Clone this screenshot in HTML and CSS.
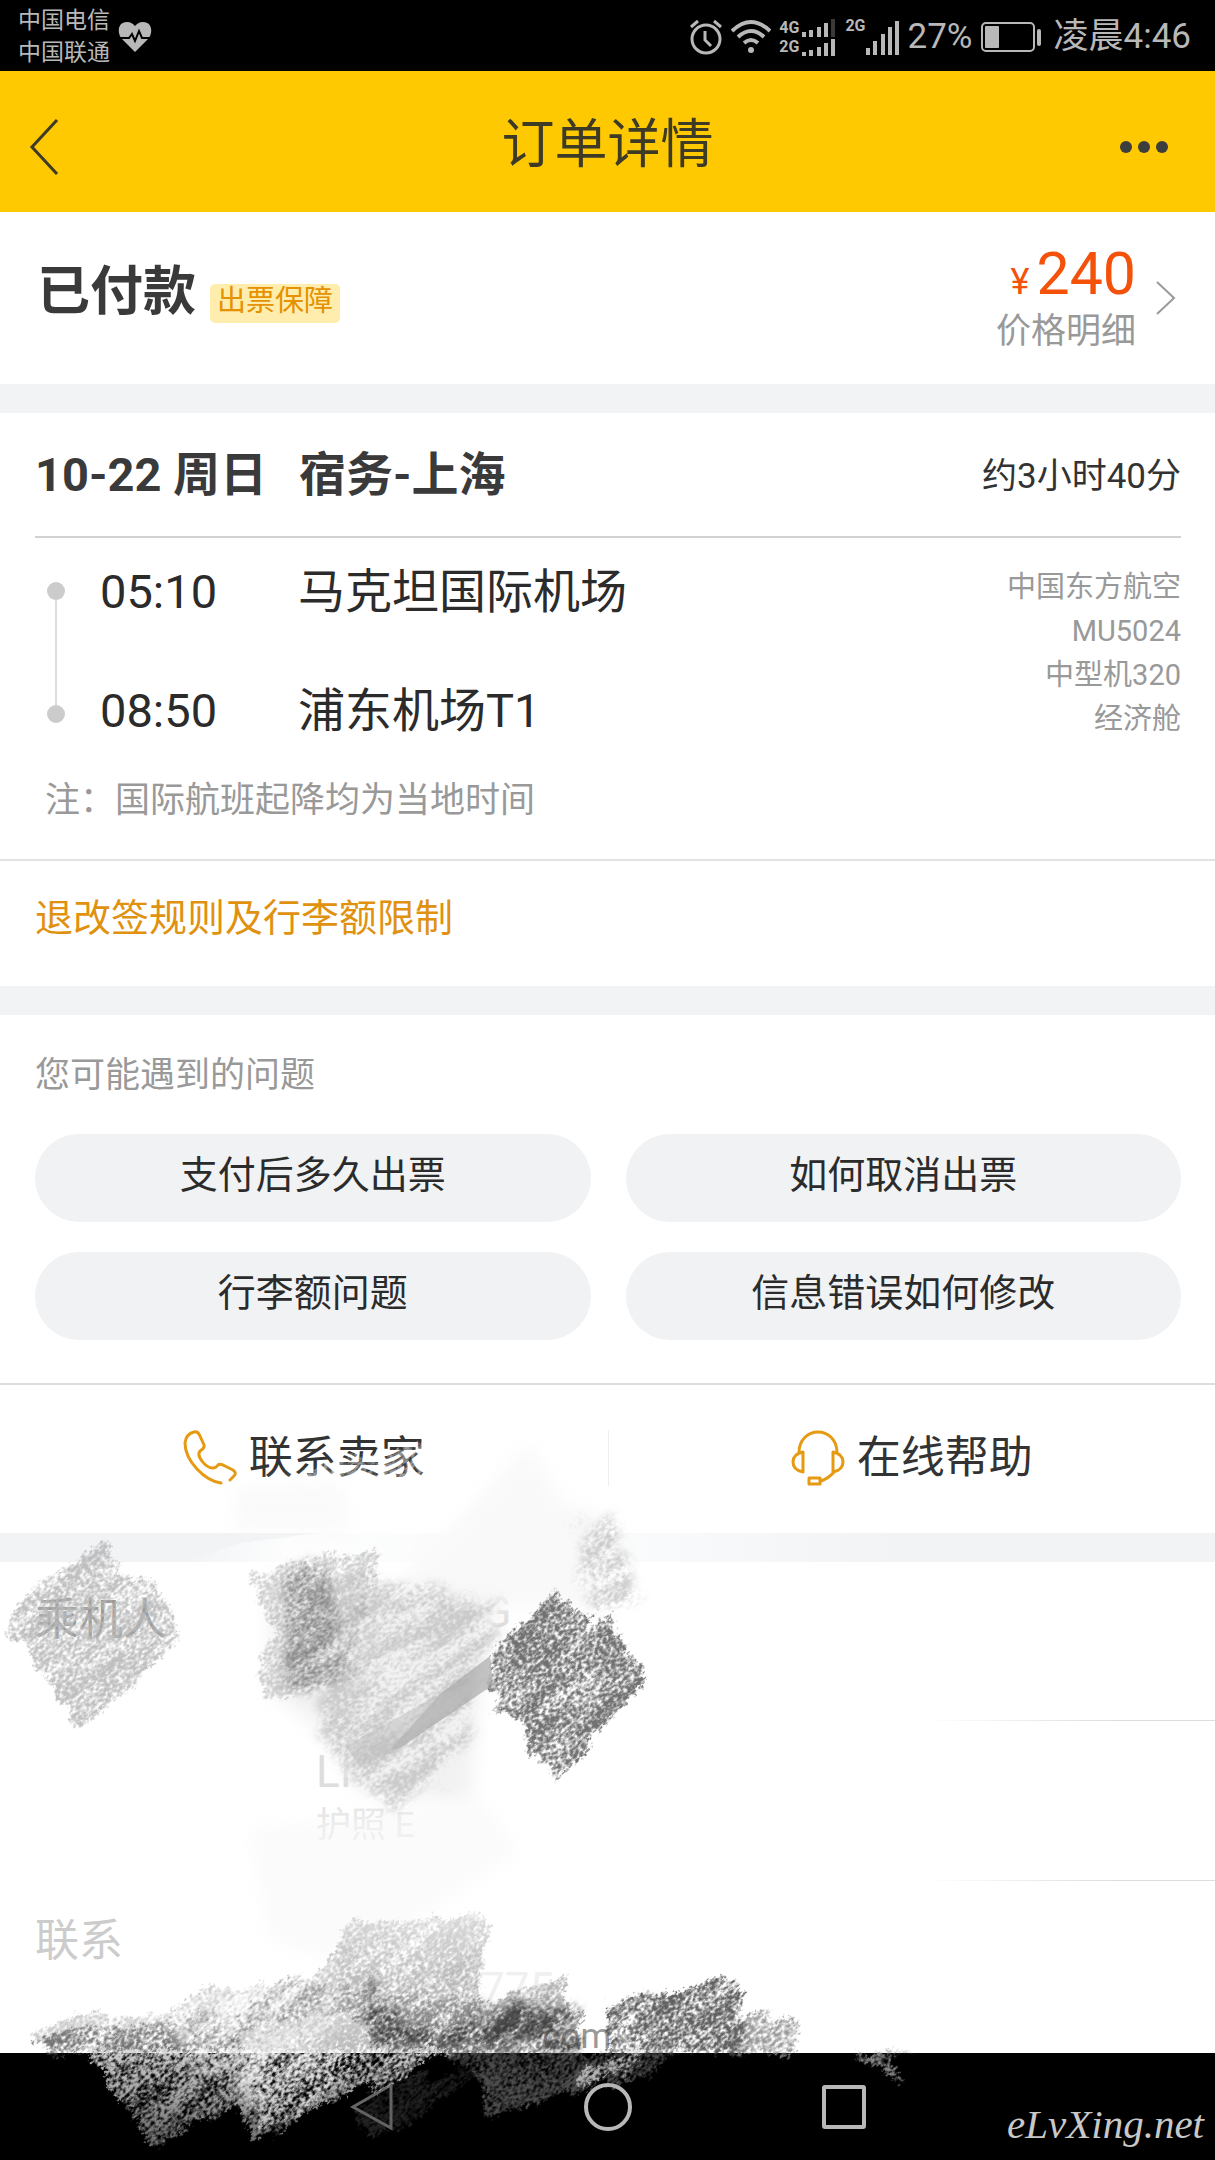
FILE: index.html
```html
<!DOCTYPE html>
<html lang="zh-CN">
<head>
<meta charset="utf-8">
<meta name="viewport" content="width=device-width, initial-scale=1">
<title>订单详情</title>
<link rel="stylesheet" href="styles.css">
</head>
<body>
<div class="page">
  <div class="status">
    <div class="carriers"><span>中国电信</span><span>中国联通</span></div>
    <svg class="heart" width="34" height="32" viewBox="0 0 34 32" aria-hidden="true">
      <path fill="#b8b8b8" d="M17 31 L3 17 C-1 11 0 1 9 1 C13 1 15 3 17 5 C19 3 21 1 25 1 C34 1 35 11 31 17 Z"/>
      <path fill="none" stroke="#000" stroke-width="2" d="M0 17 H11 L14 13 L17 20 L21 10 L24 17 H34"/>
    </svg>
    <div class="indicators">
      <svg width="34" height="36" viewBox="0 0 34 36" fill="none" stroke="#b8b8b8" aria-hidden="true">
        <circle cx="17" cy="20" r="14" stroke-width="3"/>
        <path stroke-width="3" d="M16 12 V21 L22 27 M2 8 L9 2 M32 8 L25 2"/>
      </svg>
      <svg width="40" height="36" viewBox="0 0 40 36" fill="none" stroke="#b8b8b8" stroke-width="4" aria-hidden="true">
        <path d="M1 12 Q20 -6 39 12 M7 18 Q20 6 33 18 M13 24 Q20 18 27 24"/>
        <circle cx="20" cy="31" r="3" fill="#b8b8b8" stroke="none"/>
      </svg>
      <div class="nets"><span>4G</span><span>2G</span></div>
      <svg class="small-bars" width="36" height="38" viewBox="0 0 36 38" stroke="#b8b8b8" stroke-width="4" aria-hidden="true">
        <path d="M3 19 V14 M10 19 V12 M18 19 V9 M25 19 V5 M3 38 V34 M10 38 V32 M18 38 V29 M25 38 V25 M32 38 V21"/>
        <path stroke="#3a3a3a" d="M32 19 V1"/>
      </svg>
      <span class="net">2G</span>
      <svg width="34" height="36" viewBox="0 0 34 36" stroke="#b8b8b8" stroke-width="4" aria-hidden="true">
        <path d="M2 36 V29 M9 36 V22 M17 36 V15 M24 36 V8 M31 36 V2"/>
      </svg>
      <span class="percent">27%</span>
      <svg class="battery" width="61" height="30" viewBox="0 0 61 30" aria-hidden="true">
        <rect x="1" y="1" width="52" height="28" rx="4" fill="none" stroke="#b8b8b8" stroke-width="2"/>
        <rect x="4" y="4" width="14" height="22" rx="1" fill="#b8b8b8"/>
        <rect x="56" y="7" width="4" height="17" rx="2" fill="#b8b8b8"/>
      </svg>
      <span>凌晨4:46</span>
    </div>
  </div>

  <header class="topbar">
    <button class="icon-button" aria-label="返回">
      <svg width="30" height="56" viewBox="0 0 30 56" fill="none" stroke="#3d3a26" stroke-width="3"><path d="M28 1 L3 28 L28 55"/></svg>
    </button>
    <h1>订单详情</h1>
    <button class="icon-button more" aria-label="更多">
      <svg width="50" height="14" viewBox="0 0 50 14" fill="#3d3d3d"><circle cx="7" cy="7" r="6"/><circle cx="25" cy="7" r="6"/><circle cx="43" cy="7" r="6"/></svg>
    </button>
  </header>

  <main>
    <section class="paid">
      <h2>已付款</h2><span class="badge">出票保障</span>
      <a class="price" href="#price">
        <span class="price-text">
          <span class="amount"><small>¥</small>240</span>
          <span class="detail">价格明细</span>
        </span>
        <svg width="20" height="34" viewBox="0 0 20 34" fill="none" stroke="#999" stroke-width="2"><path d="M1 1 L18 17 L1 33"/></svg>
      </a>
    </section>

    <section class="flight">
      <div class="flight-head">
        <h3><span class="date">10-22 周日</span>宿务-上海</h3>
        <span class="duration">约3小时40分</span>
      </div>
      <div class="route">
        <div class="track"><i></i><i></i></div>
        <div class="legs">
          <div class="leg"><time>05:10</time><span>马克坦国际机场</span></div>
          <div class="leg"><time>08:50</time><span>浦东机场T1</span></div>
        </div>
        <div class="plane"><span>中国东方航空</span><span>MU5024</span><span>中型机320</span><span>经济舱</span></div>
      </div>
      <p class="note">注：国际航班起降均为当地时间</p>
      <a class="rules" href="#rules">退改签规则及行李额限制</a>
    </section>

    <section class="faq">
      <h4>您可能遇到的问题</h4>
      <div class="pills">
        <button>支付后多久出票</button>
        <button>如何取消出票</button>
        <button>行李额问题</button>
        <button>信息错误如何修改</button>
      </div>
    </section>
    <section class="contact">
      <a href="#seller">
        <svg width="54" height="56" viewBox="0 0 54 56" fill="none" stroke="#e59a12" stroke-width="3" stroke-linecap="round" stroke-linejoin="round"><path d="M38 53 C22 51 2 31 2 13 Q3 4 11 2 Q15 1 17 6 L21 15 Q22 18 17 21 Q14 25 19 31 Q24 38 30 38 Q33 38 35 35 Q37 33 42 36 L50 40 Q54 43 51 46 L47 50"/></svg>
        <span>联系卖家</span>
      </a>
      <a href="#help">
        <svg width="54" height="56" viewBox="0 0 54 56" fill="none" stroke="#e59a12" stroke-width="3" stroke-linejoin="round"><path d="M8 23 C8 -5 46 -5 46 23 M12 22 Q2 24 2 32 Q2 40 12 42 Z M42 22 Q52 24 52 32 Q52 40 42 42 Z M43 42 Q38 48 30 51 M18 48 H29 V54 H18 Z"/></svg>
        <span>在线帮助</span>
      </a>
    </section>

    <section class="people">
      <div class="person first"><span class="label">乘机人</span><span class="ghost name">NG</span></div>
      <div class="person second"><span></span><span class="ghost pass"><b>LI</b><span>护照 E</span></span></div>
      <div class="person third"><span class="label faint">联系</span><span class="ghost reach"><span class="phone">775</span><span class="mail">.com</span></span></div>
    </section>
  </main>

  <nav class="navbar">
    <button aria-label="返回"><svg width="48" height="50" viewBox="0 0 48 50" fill="none" stroke="#666" stroke-width="3"><path d="M43 3 V46 L5 25 Z"/></svg></button>
    <button aria-label="主页"><svg width="50" height="50" viewBox="0 0 50 50" fill="none" stroke="#b8b8b8" stroke-width="4"><circle cx="25" cy="25" r="22"/></svg></button>
    <button aria-label="最近"><svg width="48" height="50" viewBox="0 0 48 50" fill="none" stroke="#b8b8b8" stroke-width="4"><rect x="4" y="5" width="40" height="40" rx="1"/></svg></button>
  </nav>

  <!-- chalk strokes that hide the personal data; the grain runs along the stroke direction -->
  <svg class="chalk" width="940" height="740" viewBox="0 1420 940 740" color-interpolation-filters="sRGB" aria-hidden="true">
    <defs>
      <filter id="grain" x="-5%" y="-5%" width="110%" height="110%">
        <feTurbulence type="fractalNoise" baseFrequency=".22 .34" numOctaves="3" seed="4" result="n"/>
        <feTurbulence type="fractalNoise" baseFrequency=".015 .07" numOctaves="3" seed="11" result="w"/>
        <feDisplacementMap in="SourceGraphic" in2="w" scale="24" xChannelSelector="R" yChannelSelector="G" result="d0"/>
        <feDisplacementMap in="d0" in2="n" scale="14" xChannelSelector="R" yChannelSelector="G" result="d"/>
        <feComposite in="n" in2="w" operator="arithmetic" k1="0" k2=".7" k3=".3" k4="0" result="mix"/>
        <feColorMatrix in="mix" values="0 0 0 0 0  0 0 0 0 0  0 0 0 0 0  0 0 0 4 -1.35" result="m"/>
        <feComposite in="d" in2="m" operator="in"/>
      </filter>
      <filter id="loose" x="-5%" y="-5%" width="110%" height="110%">
        <feTurbulence type="fractalNoise" baseFrequency=".2 .34" numOctaves="3" seed="9" result="n"/>
        <feTurbulence type="fractalNoise" baseFrequency=".015 .06" numOctaves="3" seed="3" result="w"/>
        <feDisplacementMap in="SourceGraphic" in2="w" scale="40" xChannelSelector="R" yChannelSelector="G" result="d0"/>
        <feGaussianBlur in="d0" stdDeviation="5" result="d"/>
        <feComposite in="n" in2="w" operator="arithmetic" k1="0" k2=".55" k3=".45" k4="0" result="mix"/>
        <feColorMatrix in="mix" values="0 0 0 0 0  0 0 0 0 0  0 0 0 0 0  0 0 0 4 -1.5" result="m"/>
        <feComposite in="d" in2="m" operator="in"/>
      </filter>
      <filter id="haze" x="-10%" y="-10%" width="120%" height="120%"><feGaussianBlur stdDeviation="9"/></filter>
      <linearGradient id="smoke" x1="0" y1="1915" x2="0" y2="2054" gradientUnits="userSpaceOnUse">
        <stop offset="0" stop-color="#888" stop-opacity=".3"/><stop offset=".55" stop-color="#777" stop-opacity=".55"/><stop offset="1" stop-color="#555" stop-opacity=".8"/>
      </linearGradient>
      <linearGradient id="dust" x1="0" y1="2040" x2="0" y2="2145" gradientUnits="userSpaceOnUse">
        <stop offset="0" stop-color="#fff" stop-opacity=".85"/><stop offset=".5" stop-color="#eee" stop-opacity=".7"/><stop offset="1" stop-color="#ccc" stop-opacity=".5"/>
      </linearGradient>
      <linearGradient id="veil" x1="180" y1="0" x2="900" y2="0" gradientUnits="userSpaceOnUse">
        <stop offset="0" stop-color="#fff" stop-opacity="0"/><stop offset=".15" stop-color="#fff" stop-opacity=".85"/><stop offset=".6" stop-color="#fff" stop-opacity=".7"/><stop offset="1" stop-color="#fff" stop-opacity="0"/>
      </linearGradient>
    </defs>
    <path fill="url(#veil)" d="M180 1564 L240 1543 L380 1525 H900 V1564Z"/>
    <g filter="url(#haze)" fill="#f8f8f8">
      <path opacity=".9" d="M530 1445 L560 1500 L610 1520 L600 1610 L380 1600 L430 1550Z"/>
      <path opacity=".7" d="M235 1490 L340 1480 L350 1530 L235 1530Z"/>
      <path opacity=".6" d="M250 1830 L480 1800 L520 1850 L400 1930 L330 1960 L270 1940Z"/>
      <path fill="#f2f2f2" d="M270 1575 L500 1600 L480 1680 L470 1800 L360 1790 L320 1730 L270 1690Z"/>
    </g>
    <g transform="rotate(-42)" filter="url(#grain)"><g transform="rotate(42)">
      <path fill="#fff" opacity=".5" d="M310 1466 L440 1440 L440 1485 L300 1490Z"/>
      <path fill="#b8b8b8" opacity=".9" d="M106 1538 L129 1573 L134 1593 L154 1580 L170 1610 L181 1638 L80 1728 L71 1717 L58 1697 L27 1650 L5 1627 L31 1590Z"/>
      <path fill="#686868" opacity=".95" d="M556 1593 L585 1620 L589 1640 L609 1623 L629 1653 L646 1677 L556 1782 L548 1770 L531 1753 L520 1720 L493 1707 L491 1653Z"/>
      <path fill="#8a8a8a" opacity=".4" d="M250 1575 L286 1563 L380 1550 L375 1590 L348 1650 L353 1677 L263 1700 L263 1660 L275 1640 L263 1610Z"/>
    </g></g>
    <g transform="rotate(-35)" filter="url(#loose)"><g transform="rotate(35)">
      <path fill="#444" opacity=".5" d="M285 1570 L335 1565 L340 1680 L290 1690 L280 1620Z"/>
      <path fill="#999" opacity=".45" d="M360 1570 L430 1590 L505 1600 L480 1660 L465 1750 L400 1815 L355 1780 L320 1735 L325 1690Z"/>
      <path fill="#999" opacity=".5" d="M605 1512 L615 1530 L628 1560 L640 1600 L600 1615 L575 1575 L578 1535Z"/>
    </g></g>
    <path fill="#aaa" opacity=".7" d="M490 1656 L493 1685 L400 1748 L390 1750 L440 1694Z"/>
    <path fill="#bbb" opacity=".5" d="M440 1694 L493 1675 L400 1748 L360 1768 L346 1746Z"/>
    <g transform="rotate(-42)" filter="url(#grain)"><g transform="rotate(42)">
      <path fill="#aaa" opacity=".6" d="M30 2033 L65 2020 L157 2013 L211 1990 L300 1985 L482 2000 L477 2054 H50Z"/>
      <path fill="url(#smoke)" d="M30 2040 L157 2020 L240 2005 L320 1973 L347 1923 L488 1915 L482 2000 L566 1975 L569 2010 L580 2017 L577 2054 H50Z"/>
      <path fill="#444" opacity=".85" d="M607 2003 L740 1976 L738 2005 L745 2015 L750 2054 H607Z"/>
      <path fill="#888" opacity=".85" d="M742 2015 L802 2022 L789 2054 H740Z"/>
    </g></g>
    <g transform="rotate(-42)" filter="url(#loose)"><g transform="rotate(42)">
      <path fill="#222" opacity=".75" d="M365 1975 L390 2010 L430 2030 L500 2010 L560 2000 L580 2048 H380 L360 2020Z"/>
      <path fill="#fff" opacity=".7" d="M150 2000 L330 1960 L350 2020 L260 2110 L200 2070Z"/>
    </g></g>
    <g transform="rotate(-42)" filter="url(#grain)"><g transform="rotate(42)">
      <path fill="url(#dust)" d="M87 2050 L130 2110 L149 2140 L161 2145 L190 2127 L238 2103 L255 2137 L279 2133 L325 2107 L390 2080 L450 2050Z"/>
      <path fill="#fff" opacity=".5" d="M240 2030 L350 2010 L375 2040 L300 2115 L262 2130 L250 2070Z"/>
      <path fill="#aaa" opacity=".45" d="M450 2054 L490 2090 L482 2115 L542 2100 L645 2077 L672 2054Z"/>
      <path fill="#ddd" opacity=".7" d="M580 2083 L590 2062 L640 2058 L620 2075Z"/>
      <path fill="#aaa" opacity=".8" d="M853 2054 H917 L890 2060 L903 2081 L890 2075 L872 2065Z"/>
      <path fill="#555" opacity=".4" d="M390 2080 L490 2070 L420 2110 L370 2140 L355 2110Z"/>
    </g></g>
  </svg>
  <span class="watermark">eLvXing.net</span>
</div>
</body>
</html>
```
FILE: styles.css
```css
* { box-sizing: border-box; margin: 0; padding: 0; }
body { background: #fff; color: #333; font-family: Roboto, "Noto Sans CJK SC", sans-serif; font-weight: 400; }
button { border: 0; background: none; font: inherit; color: inherit; }
a { color: inherit; text-decoration: none; }
svg { display: block; flex: none; }
.page { position: relative; min-height: 100vh; display: flex; flex-direction: column; }
main { flex: 1; display: flex; flex-direction: column; background: #f1f3f5; }

.status { display: flex; align-items: center; height: 71px; padding: 2px 24px 0 18px; background: #000; color: #b8b8b8; }
.carriers { display: flex; flex-direction: column; font-size: 23px; line-height: 32px; }
.heart { margin-left: 8px; }
.indicators { margin-left: auto; display: flex; align-items: center; gap: 8px; font-size: 35px; line-height: 48px; }
.nets { display: flex; flex-direction: column; }
.nets span, .net { font: bold 16px/19px Roboto, sans-serif; }
.small-bars { margin-left: -6px; }
.net { align-self: flex-start; margin: 3px -8px 0 0; }
.battery { margin-right: 4px; }

.topbar { display: grid; grid-template-columns: 1fr auto 1fr; align-items: center; height: 141px; padding: 10px 46px 0 29px; background: #fec901; color: #3d3a26; }
.topbar h1 { font-size: 53px; font-weight: 400; line-height: 72px; padding: 0 0 4px 17px; }
.icon-button { width: 50px; display: flex; }
.more { justify-self: end; }

.paid { display: flex; align-items: center; padding: 28px 39px 28px 37px; margin-bottom: 29px; background: #fff; }
.paid h2 { font-size: 53px; line-height: 72px; padding-bottom: 12px; color: #3a3a3a; }
.badge { margin: 10px 0 0 14px; padding: 0 7px 4px; border-radius: 5px; background: #ffedad; color: #e59100; font-size: 29px; line-height: 35px; }
.price { margin-left: auto; display: flex; align-items: center; gap: 20px; }
.price-text { display: flex; flex-direction: column; align-items: flex-end; }
.amount { font-size: 59px; line-height: 68px; color: #f4510b; }
.amount small { font-size: 36px; line-height: 0; margin-right: 7px; }
.detail { font-size: 35px; line-height: 48px; color: #999; }

.flight { background: #fff; margin-bottom: 29px; }
.flight-head { display: flex; align-items: center; justify-content: space-between; margin: 0 34px 0 35px; height: 125px; border-bottom: 2px solid #d2d2d2; }
.flight-head h3 { display: flex; font-size: 47px; line-height: 64px; color: #3a3a3a; }
.date { width: 264px; }
.duration { padding-bottom: 4px; font-size: 35px; }
.route { display: flex; padding: 22px 34px 0 47px; }
.track { width: 18px; height: 141px; margin-top: 22px; display: flex; flex-direction: column; justify-content: space-between; background: linear-gradient(#ddd, #ddd) center / 2px 100% no-repeat; }
.track i { width: 18px; height: 18px; border-radius: 50%; background: #ccc; }
.legs { margin-left: 35px; display: flex; flex-direction: column; gap: 55px; font-size: 47px; line-height: 64px; color: #2b2b2b; }
.leg { display: flex; }
.leg time { width: 198px; }
.plane { margin: 5px 0 0 auto; display: flex; flex-direction: column; align-items: flex-end; font-size: 29px; line-height: 44px; color: #999; }
.note { padding: 32px 45px 32px; font-size: 35px; line-height: 52px; color: #999; }
.rules { display: block; padding: 29px 35px 40px; border-top: 2px solid #e2e2e2; font-size: 38px; line-height: 56px; color: #e0910f; }

.faq { padding: 37px 34px 43px 35px; background: #fff; }
.faq h4 { font-size: 35px; font-weight: 400; line-height: 48px; color: #999; }
.pills { display: grid; grid-template-columns: 1fr 1fr; gap: 30px 35px; margin-top: 34px; }
.pills button { height: 88px; padding-bottom: 14px; border-radius: 44px; background: #f1f2f4; font-size: 38px; color: #2b2b2b; }
.contact { display: grid; grid-template-columns: 1fr 1fr; border-top: 2px solid #ddd; margin-bottom: 29px; padding: 45px 0 47px; background: #fff; }
.contact a { display: flex; align-items: center; justify-content: center; gap: 12px; height: 56px; font-size: 44px; }
.contact span { padding-bottom: 8px; }
.contact a + a { border-left: 1px solid #eee; }

.people { flex: 1; background: #fff; }
.person { display: grid; grid-template-columns: 281px 1fr; padding-left: 35px; background: linear-gradient(90deg, transparent 76%, #ddd 92%) bottom / 100% 1px no-repeat; }
.first { padding-top: 26px; height: 159px; }
.second { padding-top: 27px; height: 160px; }
.third { padding-top: 28px; background: none; }
.label { font-size: 44px; line-height: 64px; color: #999; }
.faint { color: #ccc; }
.ghost { color: #ddd; font-size: 44px; line-height: 48px; }
.name { padding-left: 134px; }
.pass { display: flex; flex-direction: column; gap: 6px; }
.pass b { font-weight: 400; color: #ddd; }
.pass span { font-size: 35px; color: #e4e4e4; }
.reach { display: flex; flex-direction: column; gap: 8px; padding: 56px 0 0 164px; }
.phone { color: #f0f0f0; }
.mail { padding-left: 53px; color: #999; font-size: 35px; line-height: 32px; }

.navbar { display: flex; align-items: center; justify-content: center; gap: 187px; height: 107px; background: #000; }
.chalk { position: absolute; left: 0; bottom: 0; pointer-events: none; }
.watermark { position: absolute; right: 11px; bottom: 12px; font: italic 41px/48px "Liberation Serif", serif; color: #c8c8c8; }
```
